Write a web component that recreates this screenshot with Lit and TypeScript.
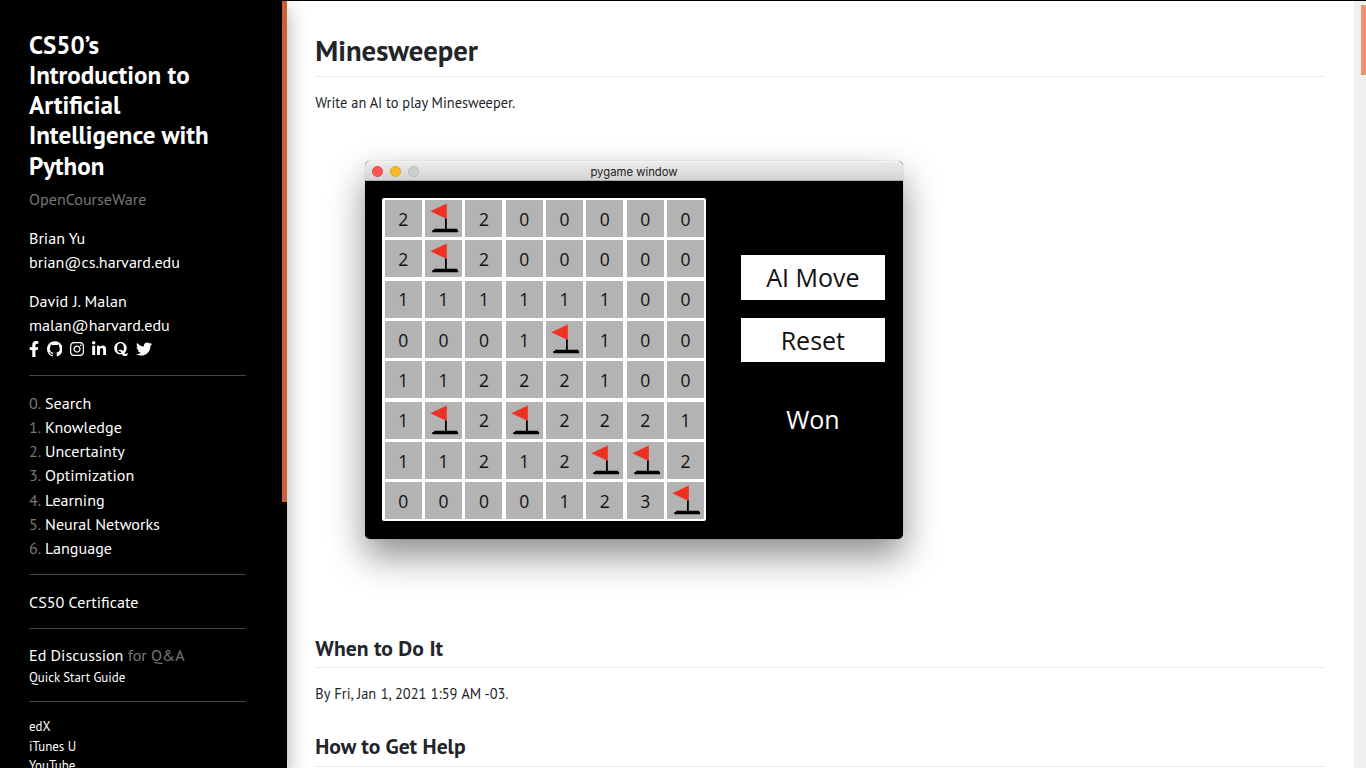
import { LitElement, html, css, svg } from "lit";
import { customElement } from "lit/decorators.js";

const BOARD = ["2F200000", "2F200000", "11111100", "0001F100", "11222100", "1F2F2221", "11212FF2", "0000123F"];

const LECTURES = ["Search", "Knowledge", "Uncertainty", "Optimization", "Learning", "Neural Networks", "Language"];

const ICONS: { name: string; w: number; box: string; d: string }[] = [
  { name: "Facebook", w: 10.06, box: "0 0 320 512", d: "M279.14 288l14.22-92.66h-88.91v-60.13c0-25.35 12.42-50.06 52.24-50.06h40.42V6.26S260.43 0 225.36 0c-73.22 0-121.08 44.38-121.08 124.72v70.62H22.89V288h81.39v224h100.17V288z" },
  { name: "GitHub", w: 15.6, box: "0 0 16 16", d: "M8 0C3.58 0 0 3.58 0 8c0 3.54 2.29 6.53 5.47 7.59.4.07.55-.17.55-.38 0-.19-.01-.82-.01-1.49-2.01.37-2.53-.49-2.69-.94-.09-.23-.48-.94-.82-1.13-.28-.15-.68-.52-.01-.53.63-.01 1.08.58 1.23.82.72 1.21 1.87.87 2.33.66.07-.52.28-.87.51-1.07-1.78-.2-3.64-.89-3.64-3.95 0-.87.31-1.59.82-2.15-.08-.2-.36-1.02.08-2.12 0 0 .67-.21 2.2.82.64-.18 1.32-.27 2-.27s1.36.09 2 .27c1.53-1.04 2.2-.82 2.2-.82.44 1.1.16 1.92.08 2.12.51.56.82 1.27.82 2.15 0 3.07-1.87 3.75-3.65 3.95.29.25.54.73.54 1.48 0 1.07-.01 1.93-.01 2.2 0 .21.15.46.55.38A8.01 8.01 0 0 0 16 8c0-4.42-3.58-8-8-8z" },
  { name: "Instagram", w: 14.09, box: "0 0 448 512", d: "M224.1 141c-63.6 0-114.9 51.3-114.9 114.9s51.3 114.9 114.9 114.9S339 319.500 339 255.900 287.700 141 224.100 141zm0 189.600c-41.100 0-74.700-33.500-74.700-74.700s33.500-74.700 74.700-74.700 74.700 33.500 74.700 74.700-33.600 74.700-74.700 74.700zm146.400-194.300c0 14.900-12 26.800-26.800 26.800-14.900 0-26.800-12-26.800-26.800s12-26.800 26.800-26.800 26.800 12 26.800 26.800zm76.100 27.200c-1.700-35.900-9.900-67.700-36.200-93.900-26.200-26.200-58-34.400-93.900-36.200-37-2.100-147.900-2.100-184.900 0-35.800 1.700-67.600 9.900-93.900 36.100s-34.400 58-36.200 93.900c-2.100 37-2.100 147.900 0 184.900 1.700 35.900 9.900 67.700 36.200 93.900s58 34.400 93.900 36.200c37 2.100 147.900 2.100 184.900 0 35.900-1.700 67.700-9.900 93.900-36.200 26.200-26.200 34.400-58 36.200-93.900 2.100-37 2.100-147.800 0-184.800zM398.800 388c-7.800 19.600-22.900 34.700-42.600 42.600-29.500 11.700-99.500 9-132.100 9s-102.700 2.600-132.100-9c-19.600-7.800-34.700-22.900-42.600-42.600-11.700-29.500-9-99.500-9-132.100s-2.600-102.700 9-132.100c7.800-19.600 22.900-34.700 42.600-42.600 29.500-11.700 99.500-9 132.100-9s102.700-2.600 132.100 9c19.600 7.800 34.700 22.900 42.600 42.600 11.700 29.500 9 99.500 9 132.100s2.700 102.700-9 132.100z" },
  { name: "LinkedIn", w: 14.09, box: "0 0 448 512", d: "M100.280 448H7.400V148.900h92.880zM53.790 108.100C24.090 108.100 0 83.500 0 53.800a53.790 53.790 0 0 1 107.580 0c0 29.700-24.100 54.300-53.790 54.300zM447.900 448h-92.680V302.400c0-34.700-.7-79.200-48.290-79.200-48.290 0-55.690 37.700-55.690 76.700V448h-92.780V148.900h89.080v40.800h1.300c12.400-23.500 42.690-48.300 87.880-48.300 94 0 111.280 61.900 111.280 142.300V448z" },
  { name: "Quora", w: 14.09, box: "0 0 448 512", d: "M440.500 386.700h-29.300c-1.500 13.500-10.500 30.800-33 30.800-20.500 0-35.300-14.200-49.500-35.800 44.200-34.200 74.700-87.500 74.700-153C403.500 111.200 306.800 32 205 32 105.300 32 7.300 111.700 7.300 228.700c0 134.100 131.300 221.600 249 189C276 451.300 302 480 351.500 480c81.800 0 90.800-75.300 89-93.300zM297 329.200C277.500 300 253.300 277 205.500 277c-30.500 0-54.300 10-69 22.800l12.200 24.300c6.200-3 13-4 19.800-4 35.500 0 53.700 30.800 69.200 61.300-10 3-20.700 4.200-32.700 4.200-75 0-107.500-53-107.500-156.700C97.500 124.500 130 71 205 71c76.200 0 108.700 53.500 108.700 157.700.1 41.800-5.400 75.600-16.700 100.500z" },
  { name: "Twitter", w: 16.1, box: "0 0 512 512", d: "M459.370 151.716c.325 4.548.325 9.097.325 13.645 0 138.720-105.583 298.558-298.558 298.558-59.452 0-114.680-17.219-161.137-47.106 8.447.974 16.568 1.299 25.340 1.299 49.055 0 94.213-16.568 130.274-44.832-46.132-.975-84.792-31.188-98.112-72.772 6.498.974 12.995 1.624 19.818 1.624 9.421 0 18.843-1.300 27.614-3.573-48.081-9.747-84.143-51.980-84.143-102.985v-1.299c13.969 7.797 30.214 12.670 47.431 13.319-28.264-18.843-46.781-51.005-46.781-87.391 0-19.492 5.197-37.360 14.294-52.954 51.655 63.675 129.300 105.258 216.365 109.807-1.624-7.797-2.599-15.918-2.599-24.040 0-57.828 46.782-104.934 104.934-104.934 30.213 0 57.502 12.670 76.670 33.137 23.715-4.548 46.456-13.320 66.599-25.340-7.798 24.366-24.366 44.833-46.132 57.827 21.117-2.273 41.584-8.122 60.426-16.243-14.292 20.791-32.161 39.308-52.628 54.253z" },
];

/** Course navigation shown on the black left column. */
@customElement("course-sidebar")
class CourseSidebar extends LitElement {
  static styles = css`
    :host { display: flex; width: 287px; flex: none; background: #000; color: #fff; position: relative; z-index: 1;
      box-shadow: 0 8px 20px rgba(0, 0, 0, 0.34); font: 16.1px/24.15px "PT Sans", Lato, sans-serif; }
    .col { width: 217px; flex: none; padding: 28.800px 36px 0 29px; overflow: hidden; }
    .title { margin: 0 0 5.700px; padding-right: 20px; font-size: 25.050px; line-height: 30.200px; font-weight: 700; }
    .muted { color: #777; }
    .num { margin-right: -0.500px; }
    .person { margin-top: 14.900px; }
    .spaced { word-spacing: 0.400px; }
    .icons { display: flex; gap: 7.600px; align-items: center; height: 23px; }
    .icons svg { display: block; height: 16.100px; fill: #fff; }
    .icons svg:nth-child(n + 5) { margin-left: 0.400px; }
    hr { border: 0; height: 1px; background: #444; margin: 0; }
    .rule { margin-top: 14.600px; }
    .list { margin: 15.300px 0 13.700px; }
    .cert { margin: 15.300px 0 13.700px; }
    .ed { margin: 14.500px 0 14px; }
    .small { font-size: 12.900px; line-height: 19.600px; }
    .links { margin-top: 14.800px; }
    .thumb { width: 5px; height: 501px; background: #c4623a; flex: none; }
  `;
  render() {
    return html`
      <div class="col">
        <h1 class="title">CS50’s Introduction to Artificial Intelligence with Python</h1>
        <div class="muted">OpenCourseWare</div>
        <div class="person">Brian Yu<br />brian@cs.harvard.edu</div>
        <div class="person spaced">David J. Malan<br />malan@harvard.edu</div>
        <div class="icons">
          ${ICONS.map((i) => html`<svg width=${i.w} viewBox=${i.box} aria-label=${i.name}>${svg`<path d=${i.d}></path>`}</svg>`)}
        </div>
        <hr class="rule" />
        <div class="list">${LECTURES.map((l, i) => html`<div><span class="muted num">${i}.</span> ${l}</div>`)}</div>
        <hr />
        <div class="cert">CS50 Certificate</div>
        <hr />
        <div class="ed"><div>Ed Discussion <span class="muted">for Q&amp;A</span></div><div class="small">Quick Start Guide</div></div>
        <hr />
        <div class="links small"><div>edX</div><div>iTunes U</div><div>YouTube</div></div>
      </div>
      <div class="thumb"></div>
    `;
  }
}

/** Game window with a finished board. */
@customElement("game-window")
class GameWindow extends LitElement {
  static styles = css`
    :host { display: block; width: 538px; height: 378px; border-radius: 5px; background: #000; overflow: hidden;
      font-family: "Open Sans", sans-serif;
      box-shadow: 0 0 1px rgba(0, 0, 0, 0.4), 0 17px 36px rgba(0, 0, 0, 0.45); }
    .bar { box-sizing: border-box; height: 20px; display: grid; grid-template-columns: 1fr auto 1fr; align-items: center;
      padding: 1px 0 0 7px; background: linear-gradient(#ececec, #d3d3d3); border-top: 1px solid #f4f4f4;
      border-bottom: 1px solid #aaa; font: 11.300px/14px Inter, sans-serif; color: #222; }
    .lights { display: flex; gap: 7px; }
    .name { margin-right: 7px; padding-top: 1px; }
    .dot { box-sizing: border-box; width: 11px; height: 11px; border-radius: 50%; border: 1px solid #e2463f; background: #fc5753; }
    .dot.amber { background: #fdb924; border-color: #dfa023; }
    .dot.off { background: #cecece; border-color: #b9b9b9; }
    .body { display: flex; padding: 17.300px 0 0 17.500px; gap: 35px; }
    .board { display: grid; grid-template-columns: repeat(8, 36.900px); grid-auto-rows: 36.900px; gap: 3.450px;
      padding: 2.200px 2.100px 2.100px 2.300px; background: #fff; border-radius: 2px; }
    .cell { background: #b3b3b3; display: flex; align-items: center; justify-content: center; font-size: 17.500px; line-height: 38px; color: #111; }
    .cell svg { width: 36.900px; height: 36.900px; display: block; }
    .side { display: flex; flex-direction: column; padding-top: 57px; gap: 18px; width: 143.600px; }
    .btn { height: 44.800px; line-height: 45px; background: #fff; color: #111; text-align: center; font-size: 25px; }
    .won { text-align: center; color: #fff; font-size: 25px; line-height: 34px; margin-top: 21.200px; }
  `;
  flag() {
    return html`<svg viewBox="0 0 36.900 36.900">
      <path fill="#ef3124" d="M5.300 11.300 21.800 3.600V19z"></path>
      <path d="M20 18.500h1.800V28.700h10.500v1.300h.8v2.300H7.300v-2.300h1.700v-1.300H20z"></path>
    </svg>`;
  }
  render() {
    return html`
      <div class="bar">
        <div class="lights"><i class="dot"></i><i class="dot amber"></i><i class="dot off"></i></div>
        <span class="name">pygame window</span><span></span>
      </div>
      <div class="body">
        <div class="board">
          ${BOARD.flatMap((r) => [...r]).map((c) => html`<div class="cell">${c === "F" ? this.flag() : c}</div>`)}
        </div>
        <div class="side">
          <div class="btn">AI Move</div>
          <div class="btn">Reset</div>
          <div class="won">Won</div>
        </div>
      </div>
    `;
  }
}

@customElement("app-root")
class AppRoot extends LitElement {
  static styles = css`
    :host { display: flex; box-sizing: border-box; width: 100%; height: 768px; overflow: hidden; border-top: 1px solid #000;
      background: #fff; color: #212529; font: 14.400px/21.600px "PT Sans", Lato, sans-serif; }
    main { flex: 1; padding: 32px 29px 0 28.300px; min-width: 0; }
    h1, h2 { margin: 0; font-weight: 700; border-bottom: 1px solid #eaecef; }
    h1 { font-size: 28.700px; line-height: 36px; padding-bottom: 7px; }
    h2 { font-size: 21.600px; line-height: 27px; padding-bottom: 5px; }
    p { margin: 0; }
    .intro { margin-top: 15px; }
    .shot { margin: 47px 0 96px 49.700px; }
    .when { margin: 15px 0 29px; word-spacing: 0.570px; }
    .last { padding-bottom: 6px; }
    .track { width: 12px; flex: none; background: #f1f0ef; display: flex; justify-content: flex-end; padding-top: 4px; }
    .thumb { width: 5px; height: 70px; background: #f08f6e; }
  `;
  render() {
    return html`
      <course-sidebar></course-sidebar>
      <main>
        <h1>Minesweeper</h1>
        <p class="intro">Write an AI to play Minesweeper.</p>
        <game-window class="shot"></game-window>
        <h2>When to Do It</h2>
        <p class="when">By Fri, Jan 1, 2021 1:59 AM -03.</p>
        <h2 class="last">How to Get Help</h2>
      </main>
      <div class="track"><div class="thumb"></div></div>
    `;
  }
}
